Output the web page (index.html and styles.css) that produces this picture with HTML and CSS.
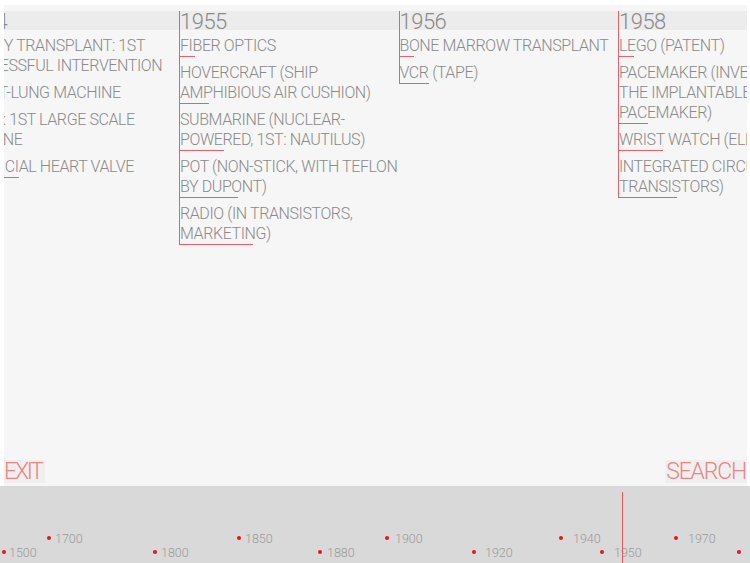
FILE: index.html
```html
<!DOCTYPE html>
<html lang="en">
<head>
<meta charset="utf-8">
<title>Timeline of inventions</title>
<link rel="stylesheet" href="styles.css">
</head>
<body>
<main class="stage">
  <div class="track">
    <section class="col">
      <h2 class="year">1954</h2>
      <ul class="items">
        <li>KIDNEY TRANSPLANT: 1ST<br>SUCCESSFUL INTERVENTION</li>
        <li>HEART-LUNG MACHINE</li>
        <li>POLIO: 1ST LARGE SCALE<br>VACCINE</li>
        <li>ARTIFICIAL HEART VALVE</li>
      </ul>
    </section>
    <section class="col">
      <h2 class="year">1955</h2>
      <ul class="items">
        <li>FIBER OPTICS</li>
        <li>HOVERCRAFT (SHIP<br>AMPHIBIOUS AIR CUSHION)</li>
        <li>SUBMARINE (NUCLEAR-<br>POWERED, 1ST: NAUTILUS)</li>
        <li>POT (NON-STICK, WITH TEFLON<br>BY DUPONT)</li>
        <li>RADIO (IN TRANSISTORS,<br>MARKETING)</li>
      </ul>
    </section>
    <section class="col">
      <h2 class="year">1956</h2>
      <ul class="items">
        <li>BONE MARROW TRANSPLANT</li>
        <li>VCR (TAPE)</li>
      </ul>
    </section>
    <section class="col">
      <h2 class="year">1958</h2>
      <ul class="items">
        <li>LEGO (PATENT)</li>
        <li>PACEMAKER (INVENTION OF<br>THE IMPLANTABLE<br>PACEMAKER)</li>
        <li>WRIST WATCH (ELECTRIC)</li>
        <li>INTEGRATED CIRCUIT (REPLACING<br>TRANSISTORS)</li>
      </ul>
    </section>
  </div>
  <div class="controls">
    <span class="btn btn-exit">EXIT</span>
    <span class="btn btn-search">SEARCH</span>
  </div>
</main>
<nav class="scale">
  <div class="mark down" style="left:2px;--g:3px"><i class="dot"></i><span>1500</span></div>
  <div class="mark up" style="left:47px;--g:4px"><i class="dot"></i><span>1700</span></div>
  <div class="mark down" style="left:153px;--g:4px"><i class="dot"></i><span>1800</span></div>
  <div class="mark up" style="left:237px;--g:4px"><i class="dot"></i><span>1850</span></div>
  <div class="mark down" style="left:318px;--g:5px"><i class="dot"></i><span>1880</span></div>
  <div class="mark up" style="left:385px;--g:6px"><i class="dot"></i><span>1900</span></div>
  <div class="mark down" style="left:472px;--g:9px"><i class="dot"></i><span>1920</span></div>
  <div class="mark up" style="left:559px;--g:10px"><i class="dot"></i><span>1940</span></div>
  <div class="mark down" style="left:600px;--g:10px"><i class="dot"></i><span>1950</span></div>
  <div class="mark up" style="left:674px;--g:10px"><i class="dot"></i><span>1970</span></div>
  <div class="mark down" style="left:737px;--g:10px"><i class="dot"></i><span>2000</span></div>
  <div class="cursor"></div>
</nav>
</body>
</html>
```
FILE: styles.css
```css
html, body {
  margin: 0;
  padding: 0;
  overflow: hidden;
  background: #ffffff;
}

body {
  width: 750px;
  height: 563px;
  font-family: Roboto, "Liberation Sans", sans-serif;
  font-weight: 300;
}

.stage {
  margin: 5px 3px 0 4px;
  height: 481px;
  background: #f6f6f6;
  overflow: hidden;
  display: flex;
  flex-direction: column;
}

.track {
  display: flex;
  align-items: flex-start;
  margin-left: -44.5px;
  padding-top: 6px;
}

.col {
  flex: 0 0 219.5px;
  box-sizing: border-box;
  border-left: 1px solid #e8606a;
}

.year {
  margin: 0;
  height: 19px;
  line-height: 21px;
  font-size: 22px;
  font-weight: 300;
  color: #8a8a8a;
  background: #ececec;
  letter-spacing: -0.5px;
  overflow: visible;
}

.items {
  list-style: none;
  margin: 0;
  padding: 0;
}

.items li {
  padding-top: 6px;
  font-size: 16px;
  line-height: 20px;
  color: #8a8a8a;
  white-space: nowrap;
  letter-spacing: -0.4px;
}

.items li::after {
  content: "";
  display: block;
  height: 1px;
  background: #e8606a;
}

.items li:nth-child(1)::after { width: 14.6px; }
.items li:nth-child(2)::after { width: 29.2px; }
.items li:nth-child(3)::after { width: 43.8px; }
.items li:nth-child(4)::after { width: 58.4px; }
.items li:nth-child(5)::after { width: 73px; }

.controls {
  margin-top: auto;
  display: flex;
  justify-content: space-between;
  align-items: flex-end;
  padding-bottom: 3px;
}

.btn {
  display: block;
  font-size: 23px;
  line-height: 23px;
  color: #ec8585;
  background: #efefef;
  padding: 0 1px;
}

.btn-exit {
  margin-left: -1px;
  letter-spacing: -2.2px;
  padding-right: 3px;
}

.btn-search {
  letter-spacing: -1.2px;
}

.scale {
  position: relative;
  height: 77px;
  background: #d9d9d9;
}

.cursor {
  position: absolute;
  left: 622px;
  top: 6px;
  bottom: 0;
  width: 1px;
  background: #e8585e;
}

.mark {
  position: absolute;
  display: flex;
  align-items: center;
  gap: var(--g);
  height: 16px;
  font-size: 12.5px;
  color: #9a9a9a;
  white-space: nowrap;
}

.mark.up { top: 44px; }
.mark.down { top: 58px; }

.dot {
  display: block;
  width: 4px;
  height: 4px;
  border-radius: 50%;
  background: #e8141e;
}
```
